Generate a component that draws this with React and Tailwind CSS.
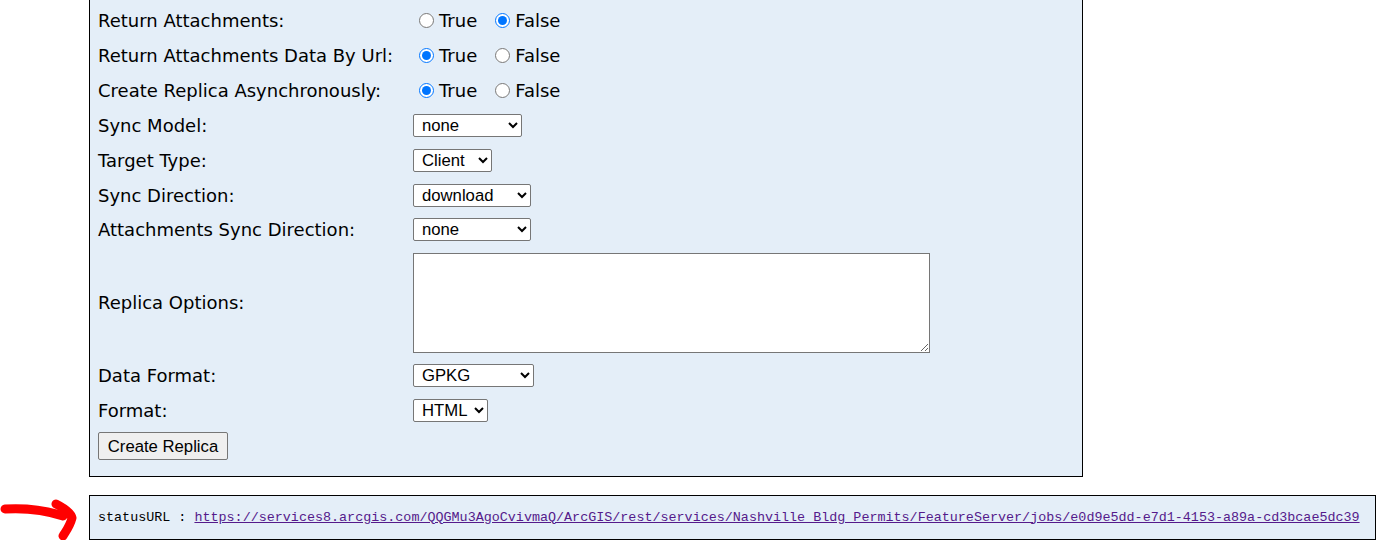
const labelCls = "font-['DejaVu_Sans','Verdana',sans-serif] text-[18px] text-black"

function Radios({ value, name }) {
  return (
    <div className={`flex items-center ${labelCls}`}>
      <label className="flex items-center">
        <input type="radio" name={name} defaultChecked={value} className="ml-[6px] mr-[5px] h-[15px] w-[15px]" />
        <span>True</span>
      </label>
      <label className="ml-[18px] flex items-center">
        <input type="radio" name={name} defaultChecked={!value} className="mr-[5px] h-[15px] w-[15px]" />
        <span>False</span>
      </label>
    </div>
  )
}

function Select({ width, value }) {
  return (
    <select
      defaultValue={value}
      className="h-[23px] rounded-[2px] border border-[#767676] bg-white pl-[4px] font-['Liberation_Sans',Arial,sans-serif] text-[16.7px] text-black"
      style={{ width }}
    >
      <option>{value}</option>
    </select>
  )
}

function Row({ label, children, h = 'h-[34.85px]' }) {
  return (
    <div className={`flex items-center ${h}`}>
      <div className={`w-[315px] ${labelCls}`}>{label}</div>
      <div className="flex items-center">{children}</div>
    </div>
  )
}

export default function App() {
  return (
    <div className="min-h-[541px] bg-white">
      <div className="ml-[89px] w-[994px] border border-t-0 border-black bg-[#e4eef8] pl-[8px] pt-[3.5px] pb-[12px]">
        <Row label="Return Attachments:"><Radios name="ra" value={false} /></Row>
        <Row label="Return Attachments Data By Url:"><Radios name="rau" value={true} /></Row>
        <Row label="Create Replica Asynchronously:"><Radios name="cra" value={true} /></Row>
        <Row label="Sync Model:"><Select width="109px" value="none" /></Row>
        <Row label="Target Type:"><Select width="79px" value="Client" /></Row>
        <Row label="Sync Direction:"><Select width="118px" value="download" /></Row>
        <Row label="Attachments Sync Direction:"><Select width="118px" value="none" /></Row>
        <Row label="Replica Options:" h="h-[111px]">
          <textarea className="h-[100px] w-[517px] border border-[#767676] bg-white" />
        </Row>
        <Row label="Data Format:"><Select width="121px" value="GPKG" /></Row>
        <Row label="Format:"><Select width="75px" value="HTML" /></Row>
        <div className="flex h-[36px] items-center">
          <button className="h-[28px] w-[130px] rounded-[2px] border border-[#767676] bg-[#efefef] font-['Liberation_Sans',Arial,sans-serif] text-[16.7px] text-black">
            Create Replica
          </button>
        </div>
      </div>

      <div className="mt-[18px] flex items-center">
        <svg width="89" height="45" viewBox="0 0 89 45" className="shrink-0">
          <path d="M5 14 C22 13 45 15 63 21" fill="none" stroke="#ff0000" strokeWidth="9" strokeLinecap="round" />
          <path d="M56 9 C64 13 71 18 72 23 C70 31 66 36 63 41" fill="none" stroke="#ff0000" strokeWidth="9" strokeLinecap="round" strokeLinejoin="round" />
        </svg>
        <div className="flex h-[45px] w-[1287px] items-center border border-black bg-[#e4eef8] pl-[8px] font-['Liberation_Mono','DejaVu_Sans_Mono',monospace] text-[13.4px] text-black">
          <span className="whitespace-pre">statusURL : </span>
          <a href="#" className="text-[#551a8b] underline">
            https://services8.arcgis.com/QQGMu3AgoCvivmaQ/ArcGIS/rest/services/Nashville_Bldg_Permits/FeatureServer/jobs/e0d9e5dd-e7d1-4153-a89a-cd3bcae5dc39
          </a>
        </div>
      </div>
    </div>
  )
}
